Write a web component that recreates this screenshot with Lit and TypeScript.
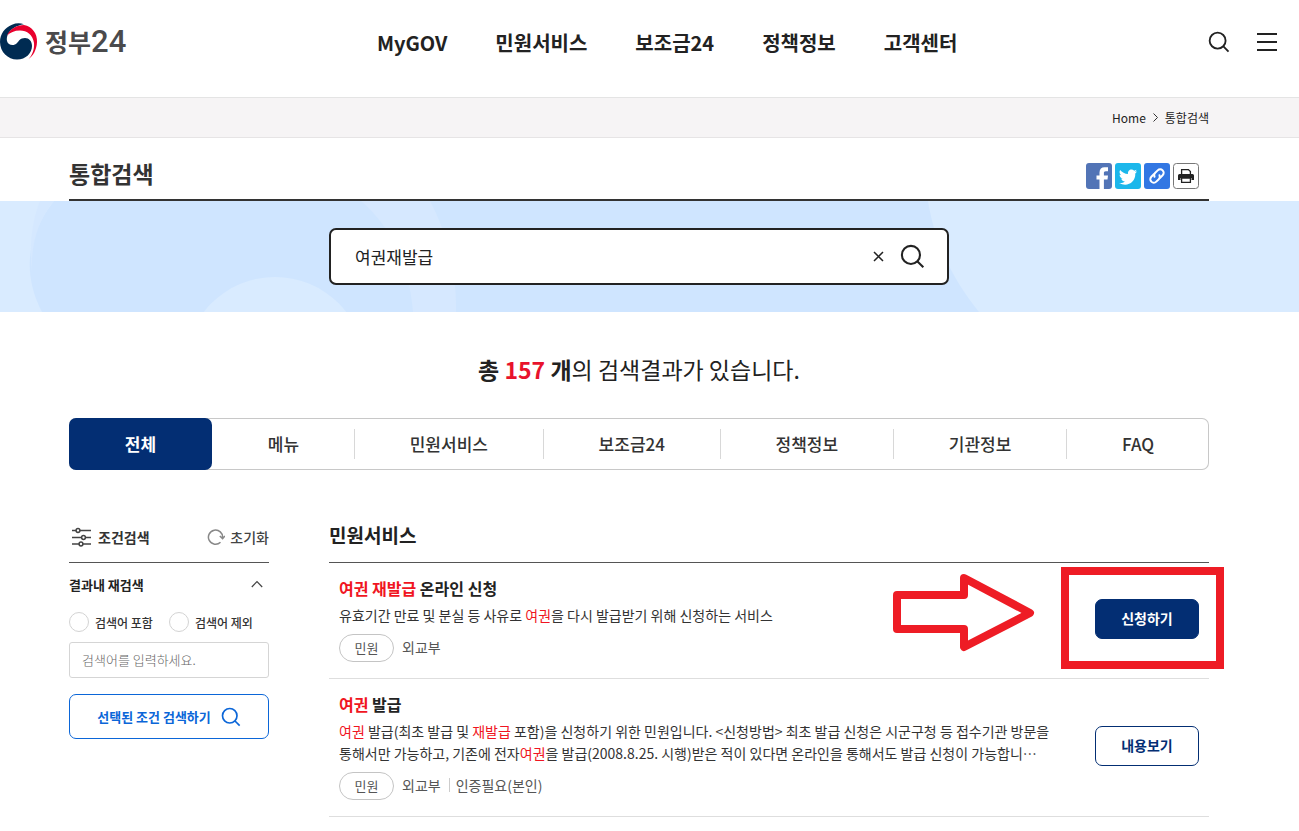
import { LitElement, html, css, svg } from "lit";
import { customElement, state } from "lit/decorators.js";

const magnifier = (cls: string) => html`<svg class=${cls} viewBox="0 0 24 24" aria-hidden="true">
  <circle cx="10.5" cy="10.5" r="8.7"></circle>
  <path d="M16.8 16.8L22.4 22.4"></path>
</svg>`;

const hit = (text: string) => html`<em class="hit">${text}</em>`;

@customElement("site-header")
export class SiteHeader extends LitElement {
  static styles = css`
    :host { display: block; }
    .bar {
      display: flex; justify-content: space-between; align-items: center;
      height: 84px; padding: 0 21px 13px 0; border-bottom: 1px solid #e4e4e4;
    }
    a { color: inherit; text-decoration: none; }
    .logo { display: flex; align-items: center; gap: 7px; color: #4a4a4c; }
    .emblem { width: 38px; height: 38px; display: block; }
    .name { display: flex; align-items: baseline; padding-bottom: 2px; font-size: 25px; font-weight: 700; line-height: 36px; }
    .num { font-family: Roboto, sans-serif; font-size: 31px; font-weight: 500; }
    .menu { display: flex; gap: 48px; margin: 0; padding: 2px 0 0; list-style: none; font-size: 20px; font-weight: 700; line-height: 28px; }
    .tools { display: flex; gap: 26px; }
    button { padding: 0; border: 0; background: none; display: block; }
    .icon { display: block; width: 22px; height: 22px; fill: none; stroke: #222; stroke-width: 2; }
  `;
  render() {
    return html`<header class="bar">
      <a class="logo" href="#" aria-label="정부24">
        <svg class="emblem" viewBox="0 0 38 38" aria-hidden="true">
          <path fill="#002b52" d="M24 1.200C20 0 16 0 12 1.800C5 4.500 0 11 0 19C0 29 8 36.500 17 36.500C26 36.500 32 30 32 23C32 18 29 15 25 15C20 15 19 18 17 20C14 23.500 8 22.500 7 18C6.500 16 7 13 8 11C11 6 16 2.500 24 1.200Z"></path>
          <path fill="#e9002d" d="M7 12.500C10 6 17 2 24 2C32 3 37.500 11 37 19C36.700 27 33 33 28.500 36C32.500 32 34.500 26 34 20C33 12 27 7.500 20 7.500C14.500 7.500 10 9.500 7 12.500Z"></path>
        </svg>
        <span class="name">정부<span class="num">24</span></span>
      </a>
      <nav>
        <ul class="menu">
          ${["MyGOV", "민원서비스", "보조금24", "정책정보", "고객센터"].map((t) => html`<li><a href="#">${t}</a></li>`)}
        </ul>
      </nav>
      <div class="tools">
        <button type="button" aria-label="검색">${magnifier("icon")}</button>
        <button type="button" aria-label="전체메뉴">
          <svg class="icon" viewBox="0 0 22 22" aria-hidden="true"><path d="M1 3h20M1 11h20M1 19h20"></path></svg>
        </button>
      </div>
    </header>`;
  }
}

@customElement("result-item")
export class ResultItem extends LitElement {
  static properties = {
    heading: { attribute: false },
    body: { attribute: false },
    tags: { attribute: false },
    action: {},
    primary: { type: Boolean },
  };
  declare heading: unknown;
  declare body: unknown;
  declare tags: string[];
  declare action: string;
  declare primary: boolean;

  static styles = css`
    :host { display: block; position: relative; border-bottom: 1px solid #dedede; }
    .row { display: flex; align-items: center; gap: 16px; padding: 13px 10px 16px; }
    .text { flex: 1; min-width: 0; }
    h3 { margin: 0; font-size: 16px; font-weight: 700; line-height: 24px; color: #222; }
    h3 a { color: inherit; text-decoration: none; }
    p { margin: 4px 0 8px; font-size: 14px; line-height: 22px; color: #333; }
    .hit { font-style: normal; color: #f01522; }
    .meta { display: flex; align-items: center; height: 28px; font-size: 14px; color: #555; }
    .badge {
      box-sizing: border-box; width: 55px; height: 28px; margin-right: 8px; border: 1px solid #c4c4c4;
      border-radius: 14px; text-align: center; font-size: 13px; line-height: 26px;
    }
    .tag { line-height: 14px; margin-bottom: 2px; }
    .tag + .tag { margin-left: 8px; padding-left: 6px; border-left: 1px solid #ccc; }
    .action {
      box-sizing: border-box; width: 104px; height: 40px; padding: 0 0 2px; border: 1px solid #032e73;
      border-radius: 7px; background: #fff; color: #032e73; font: inherit; font-size: 14px; font-weight: 700;
    }
    .primary { background: #032e73; color: #fff; }
  `;
  render() {
    return html`<article class="row">
        <div class="text">
          <h3><a href="#">${this.heading}</a></h3>
          <p>${this.body}</p>
          <div class="meta">
            <span class="badge">민원</span>
            ${this.tags.map((t) => html`<span class="tag">${t}</span>`)}
          </div>
        </div>
        <button type="button" class="action ${this.primary ? "primary" : ""}">${this.action}</button>
      </article>
      <slot></slot>`;
  }
}

@customElement("filter-panel")
export class FilterPanel extends LitElement {
  static styles = css`
    :host { display: block; }
    .head { display: flex; justify-content: space-between; align-items: center; box-sizing: border-box; height: 50px; padding-bottom: 2px; border-bottom: 1px solid #555; }
    h2 { display: flex; align-items: center; gap: 7px; margin: 0; padding-left: 2px; font-size: 14px; font-weight: 700; color: #333; }
    svg { display: block; fill: none; }
    .sliders { width: 20px; height: 20px; stroke: #444; stroke-width: 1.500; }
    button { padding: 0; border: 0; background: none; font: inherit; }
    .reset { display: flex; align-items: center; gap: 5px; font-size: 14px; font-weight: 500; color: #444; }
    .turn { width: 18px; height: 18px; stroke: #888; stroke-width: 1.500; }
    fieldset { margin: 0; padding: 0; border: 0; min-width: 0; }
    .fold {
      display: flex; width: 100%; justify-content: space-between; align-items: center; height: 44px;
      padding: 0 6px 2px 0; font-size: 13px; font-weight: 700; color: #222;
    }
    .chev { width: 12px; height: 8px; stroke: #444; stroke-width: 1.200; }
    .choices { display: flex; height: 30px; align-items: center; }
    .choices label { display: flex; align-items: center; gap: 6px; width: 100px; white-space: nowrap; font-size: 12px; font-weight: 500; color: #333; }
    .choices input { appearance: none; width: 20px; height: 20px; margin: 0; border: 1px solid #d3d3d3; border-radius: 50%; background: #fff; }
    .choices input:checked { border: 6px solid #0b66d8; }
    .word {
      box-sizing: border-box; width: 100%; height: 36px; margin: 5px 0 16px; padding: 0 12px 2px;
      border: 1px solid #d5d5d5; border-radius: 3px; font: inherit; font-size: 13px; color: #333; display: block;
    }
    .word::placeholder { color: #666; opacity: 1; font-weight: 300; }
    .apply {
      display: flex; justify-content: center; align-items: center; gap: 10px; box-sizing: border-box; width: 100%;
      height: 45px; border: 1px solid #0b66d8; border-radius: 7px; background: #fff; font-size: 13px; font-weight: 700; color: #0b66d8;
    }
    .glass { width: 20px; height: 20px; stroke: #0b66d8; stroke-width: 2; }
  `;
  render() {
    return html`<div class="head">
        <h2>
          <svg class="sliders" viewBox="0 0 20 20" aria-hidden="true">
            <path d="M1 3.500H5M9 3.500H20M1 10.500H10.500M14.500 10.500H20M1 17H8M12 17H20"></path>
            <circle cx="7" cy="3.500" r="1.900"></circle><circle cx="12.500" cy="10.500" r="1.900"></circle><circle cx="10" cy="17" r="1.900"></circle>
          </svg>조건검색
        </h2>
        <button type="button" class="reset">
          <svg class="turn" viewBox="0 0 18 18" aria-hidden="true">
            <path d="M13.500 14.200A7.100 7.100 0 1 1 15.600 9.800M12.800 8L15.600 10.600L18 8"></path>
          </svg>초기화
        </button>
      </div>
      <button type="button" class="fold" aria-expanded="true">결과내 재검색
        <svg class="chev" viewBox="0 0 12 8" aria-hidden="true"><path d="M.8 7L6 1.500L11.200 7"></path></svg>
      </button>
      <form @submit=${(e: Event) => e.preventDefault()}>
        <fieldset aria-label="결과내 재검색">
          <div class="choices">
            <label><input type="radio" name="mode" value="in" />검색어 포함</label>
            <label><input type="radio" name="mode" value="out" />검색어 제외</label>
          </div>
          <input class="word" type="text" aria-label="검색어" placeholder="검색어를 입력하세요." />
        </fieldset>
        <button type="submit" class="apply">선택된 조건 검색하기 ${magnifier("glass")}</button>
      </form>`;
  }
}

@customElement("app-root")
export class AppRoot extends LitElement {
  @state() private query = "여권재발급";
  @state() private tab = 0;

  static styles = css`
    :host {
      display: block; min-height: 100vh; background: #fff; color: #222; overflow-x: hidden;
      font-family: "Noto Sans CJK KR", "Noto Sans", sans-serif; font-size: 14px;
    }
    .wrap { padding: 0 90px 0 69px; }
    svg { display: block; }
    button { padding: 0; border: 0; background: none; font: inherit; color: inherit; }
    a { color: inherit; text-decoration: none; }
    .crumbs {
      display: flex; justify-content: flex-end; align-items: center; gap: 7px; height: 39px;
      background: #f6f4f5; border-bottom: 1px solid #e6e4e5; font-size: 12px; color: #222;
    }
    .sep { width: 5px; height: 9px; fill: none; stroke: #333; }
    .title { display: flex; justify-content: space-between; align-items: center; height: 61px; border-bottom: 2px solid #333; }
    h1 { margin: 0; padding-top: 8px; font-size: 23px; line-height: 34px; font-weight: 700; color: #333; }
    .share { display: flex; gap: 3px; padding: 14px 10px 0 0; }
    .share svg { width: 26px; height: 26px; }
    .banner { position: relative; padding: 27px 90px 27px 69px; background: #d9ebff; overflow: hidden; }
    .deco { position: absolute; inset: 0; width: 100%; height: 100%; }
    .search {
      position: relative; display: flex; align-items: center; box-sizing: border-box; width: 100%; max-width: 620px; height: 57px;
      margin: 0 auto; padding: 0 22px 0 24px; border: 2px solid #222; border-radius: 7px; background: #fff;
    }
    .query { flex: 1; min-width: 0; height: 40px; padding: 0; border: 0; outline: 0; background: none; font: inherit; font-size: 17px; color: #222; }
    .clear svg { width: 11px; height: 11px; fill: none; stroke: #222; stroke-width: 1.500; margin-right: 16px; }
    .glass { width: 25px; height: 25px; fill: none; stroke: #222; stroke-width: 2; }
    .total { margin: 39px 0 31px; text-align: center; font-size: 23px; line-height: 36px; color: #222; font-weight: 400; }
    .total b { font-weight: 700; }
    .count { color: #e8132c; }
    .tabs { display: flex; align-items: center; height: 52px; border-radius: 7px; box-shadow: inset 0 0 0 1px #c8c8c8; }
    .tab { flex: 1 1 auto; height: 30px; padding: 0 6px 2px; border-left: 1px solid #d8d8d8; font-size: 17px; font-weight: 500; color: #333; }
    .tab:first-child, .on + .tab { border-left-color: transparent; }
    .tab.on { height: 52px; padding: 0 7px 2px; border: 0; border-radius: 7px; background: #032e73; color: #fff; font-weight: 700; }
    .columns { display: grid; grid-template-columns: 200px minmax(0, 1fr); gap: 60px; padding-top: 43px; padding-bottom: 14px; }
    .results h2 {
      display: flex; align-items: center; box-sizing: border-box; height: 50px; margin: 0; padding-bottom: 6px; border-bottom: 1px solid #555;
      font-size: 19px; line-height: 28px; font-weight: 700; color: #222;
    }
    .hit { font-style: normal; color: #f01522; }
    .mark { position: absolute; top: 4px; right: -15px; width: 331px; height: 102px; pointer-events: none; fill: none; stroke: #ee1c25; stroke-width: 8; }
  `;

  private tabNames = ["전체", "메뉴", "민원서비스", "보조금24", "정책정보", "기관정보", "FAQ"];

  render() {
    return html`
      <site-header></site-header>
      <nav class="crumbs wrap" aria-label="현재 위치">
        <a href="#">Home</a>
        <svg class="sep" viewBox="0 0 5 9" aria-hidden="true"><path d="M.5 .5L4.500 4.500L.5 8.500"></path></svg>
        <span>통합검색</span>
      </nav>
      <div class="wrap">
        <div class="title">
          <h1>통합검색</h1>
          <div class="share">${this.shareButtons()}</div>
        </div>
      </div>
      <section class="banner">
        <svg class="deco" viewBox="0 0 1299 111" preserveAspectRatio="xMinYMin slice" aria-hidden="true">
          <path fill="#cfe5ff" d="M54 0C24 38 24 76 42 111H979C954 80 935 44 928 0Z"></path>
          <path fill="#d5e8ff" d="M40 0H54C36 22 31 46 32 72C29 44 32 20 40 0Z"></path>
          <path fill="#d6e8ff" d="M361 0H430C446 30 457 68 456 111H413C409 64 393 28 361 0Z"></path>
          <circle fill="#d9ebff" cx="275" cy="166" r="90"></circle>
        </svg>
        <form class="search" role="search" @submit=${(e: Event) => e.preventDefault()}>
          <input class="query" type="text" aria-label="통합검색" .value=${this.query}
            @input=${(e: InputEvent) => (this.query = (e.target as HTMLInputElement).value)} />
          <button class="clear" type="button" aria-label="지우기" @click=${() => (this.query = "")}>
            <svg viewBox="0 0 11 11" aria-hidden="true"><path d="M1 1L10 10M10 1L1 10"></path></svg>
          </button>
          <button type="submit" aria-label="검색">${magnifier("glass")}</button>
        </form>
      </section>
      <main class="wrap">
        <p class="total"><b>총 <span class="count">157</span> 개</b>의 검색결과가 있습니다.</p>
        <div class="tabs" role="tablist">
          ${this.tabNames.map((t, i) => html`<button type="button" role="tab" class="tab ${i === this.tab ? "on" : ""}"
            aria-selected=${i === this.tab} @click=${() => (this.tab = i)}>${t}</button>`)}
        </div>
        <div class="columns">
          <aside><filter-panel></filter-panel></aside>
          <section class="results">
            <h2>민원서비스</h2>
            <result-item primary action="신청하기" .tags=${["외교부"]}
              .heading=${html`${hit("여권 재발급")} 온라인 신청`}
              .body=${html`유효기간 만료 및 분실 등 사유로 ${hit("여권")}을 다시 발급받기 위해 신청하는 서비스`}>
              <svg class="mark" viewBox="0 0 331 102" aria-hidden="true">
                <path stroke-linejoin="round" d="M4 28H71V11L137 46L71 80V62H4Z"></path>
                <rect x="172" y="4" width="155" height="94"></rect>
              </svg>
            </result-item>
            <result-item action="내용보기" .tags=${["외교부", "인증필요(본인)"]}
              .heading=${html`${hit("여권")} 발급`}
              .body=${html`${hit("여권")} 발급(최초 발급 및 ${hit("재발급")} 포함)을 신청하기 위한 민원입니다. &lt;신청방법&gt; 최초 발급 신청은 시군구청 등 접수기관 방문을<br />통해서만 가능하고, 기존에 전자${hit("여권")}을 발급(2008.8.25. 시행)받은 적이 있다면 온라인을 통해서도 발급 신청이 가능합니⋯`}>
            </result-item>
          </section>
        </div>
      </main>`;
  }

  private shareButtons() {
    const items = [
      ["페이스북", svg`<rect width="26" height="26" rx="3" fill="#5274b6"></rect><path fill="#fff" d="M13.500 26V16.500H10.500V12.500H13.500V9.500C13.500 6 15.500 4.300 18.500 4.300H22V8.200H19.700C18.300 8.200 17.900 8.900 17.900 10V12.500H22L21.500 16.500H17.900V26Z"></path>`],
      ["트위터", svg`<rect width="26" height="26" rx="3" fill="#1cb7eb"></rect><path fill="#fff" d="M22 8.300C21.300 8.600 20.700 8.800 20 8.900C20.700 8.400 21.300 7.700 21.500 6.800C20.800 7.200 20 7.500 19.200 7.700C16.700 5 12.300 7 13 11C9.800 10.900 7 9.300 5.100 7C4 9 4.700 11 6.300 12.200C5.700 12.200 5.100 12 4.600 11.700C4.600 13.700 6 15.300 7.900 15.700C7.300 15.900 6.700 15.900 6.200 15.800C6.700 17.400 8.200 18.500 9.900 18.500C8.200 19.900 6.300 20.400 4.200 20.100C11.800 24.600 20.700 19.600 20.300 10.600C21 10 21.600 9.200 22 8.300Z"></path>`],
      ["주소 복사", svg`<rect width="26" height="26" rx="3" fill="#3277e3"></rect><g transform="rotate(-45 13 13)" fill="none" stroke="#fff" stroke-width="2" stroke-linecap="round"><path d="M12 9.500H8.500a3.500 3.500 0 0 0 0 7H12a3.500 3.500 0 0 0 3.300-2.300"></path><path d="M14 16.500H17.500a3.500 3.500 0 0 0 0-7H14a3.500 3.500 0 0 0-3.300 2.300"></path></g>`],
      ["인쇄", svg`<rect x=".5" y=".5" width="25" height="25" rx="3" fill="#fff" stroke="#777"></rect><path fill="none" stroke="#222" stroke-width="1.300" d="M8.600 11V6.600H15.400L17.400 8.600V11"></path><path fill="#222" d="M6.500 11H19.500Q21 11 21 12.500V17H18.500V15H7.500V17H5V12.500Q5 11 6.500 11Z"></path><path fill="#fff" stroke="#222" stroke-width="1.300" d="M8.600 15H17.400V19.400H8.600Z"></path>`],
    ] as const;
    return items.map(([name, art]) => html`<button type="button" aria-label=${name}><svg viewBox="0 0 26 26" aria-hidden="true">${art}</svg></button>`);
  }
}
